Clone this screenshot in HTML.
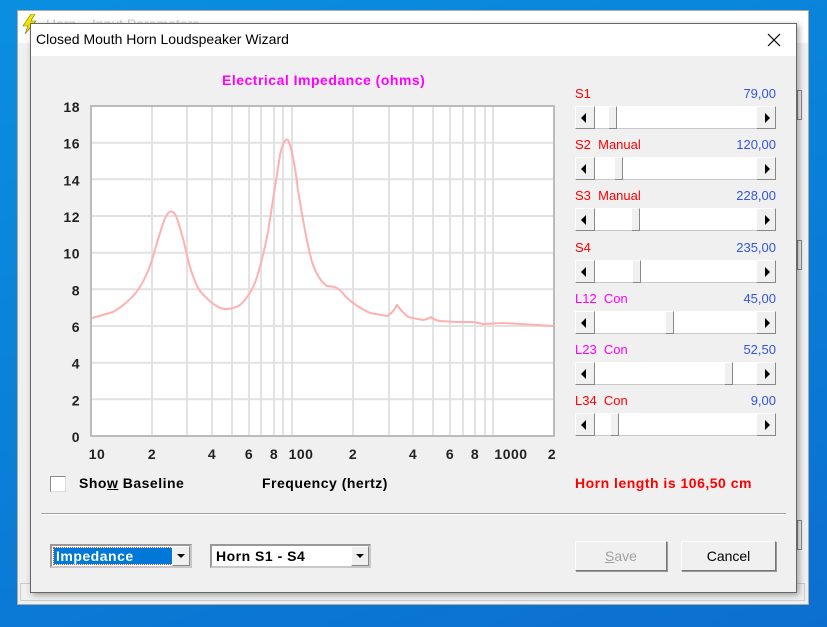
<!DOCTYPE html>
<html><head><meta charset="utf-8"><style>
*{margin:0;padding:0;box-sizing:border-box}
body{width:827px;height:627px;overflow:hidden;position:relative;background:linear-gradient(160deg,#0a8fe0 0%,#0a7fd8 50%,#0c6fd0 100%);font-family:"Liberation Sans",sans-serif}
.abs{position:absolute}
.b{font-weight:bold;font-size:14px;letter-spacing:0.5px}
.sb{position:absolute;left:575px;width:201px;height:23px;background:#fff;border-bottom:1px solid #c8c8c8}
.sb .l,.sb .r{position:absolute;top:0;width:20px;height:23px;background:#f0f0f0;border:1px solid #fff;border-right-color:#888;border-bottom-color:#888}
.sb .l{left:0}.sb .r{right:0}
.sb .t{position:absolute;top:0;width:9px;height:23px;background:#f0f0f0;border:1px solid #fff;border-right-color:#888;border-bottom-color:#888}
.lab{position:absolute;left:575px;font-size:13px;color:#f00}
.val{position:absolute;right:51px;font-size:13px;color:#3355dd}
.btn{position:absolute;height:30px;background:#f0f0f0;border:1px solid #fff;border-right-color:#777;border-bottom-color:#777;box-shadow:1px 1px 0 #999;font-size:14px;text-align:center;line-height:28px}
.cb{position:absolute;height:24px;background:#fff;border:2px solid #c8c8c8;border-top-color:#999;border-left-color:#999}
.cb .ar{position:absolute;right:0;top:0;width:18px;height:20px;background:#f0f0f0;border:1px solid #fff;border-right-color:#888;border-bottom-color:#888}
</style></head><body>
<!-- background window -->
<div class="abs" style="left:17px;top:10px;width:792px;height:595px;background:#f0f0f0;border:1px solid #aaa"></div>
<div class="abs" style="left:18px;top:11px;width:790px;height:32px;background:#fff"></div>
<svg class="abs" style="left:22px;top:14px" width="16" height="20"><path d="M9 0L1 12h5L3 20 14 7H9l4-7z" fill="#f5e400" stroke="#887700" stroke-width=".6"/></svg>
<div class="abs" style="left:46px;top:16px;color:#ccc;font-size:14px">Horn... Input Parameters</div>
<div class="abs" style="left:797px;top:90px;width:5px;height:30px;border:1px solid #888"></div>
<div class="abs" style="left:797px;top:240px;width:5px;height:30px;border:1px solid #888"></div>
<div class="abs" style="left:797px;top:520px;width:5px;height:30px;border:1px solid #888"></div>
<div class="abs" style="left:20px;top:583px;width:785px;height:18px;border:1px solid #ccc;background:#f0f0f0"></div>
<!-- dialog -->
<div class="abs" style="left:30px;top:23px;width:767px;height:570px;background:#f0f0f0;border:1px solid #666;box-shadow:2px 2px 6px rgba(0,0,0,.35)"></div>
<div class="abs" style="left:31px;top:24px;width:765px;height:32px;background:#fff"></div>
<div class="abs" style="left:36px;top:31px;font-size:14px;color:#000">Closed Mouth Horn Loudspeaker Wizard</div>
<svg class="abs" style="left:767px;top:33px" width="14" height="14"><path d="M1 1L13 13M13 1L1 13" stroke="#000" stroke-width="1.2"/></svg>

<div class="abs b" style="left:222px;top:72px;color:#f0f" >Electrical Impedance (ohms)</div>

<svg class="abs" style="left:0;top:0" width="560" height="470">
<rect x="91" y="106" width="463" height="330" fill="#fff" stroke="#bbb" stroke-width="2"/>
<g stroke="#e2e2e2" stroke-width="2">
<line x1="91" y1="142.7" x2="554" y2="142.7"/><line x1="91" y1="179.3" x2="554" y2="179.3"/><line x1="91" y1="216" x2="554" y2="216"/><line x1="91" y1="252.7" x2="554" y2="252.7"/><line x1="91" y1="289.3" x2="554" y2="289.3"/><line x1="91" y1="326" x2="554" y2="326"/><line x1="91" y1="362.7" x2="554" y2="362.7"/><line x1="91" y1="399.3" x2="554" y2="399.3"/>
<line x1="152" y1="106" x2="152" y2="436"/><line x1="187" y1="106" x2="187" y2="436"/><line x1="212" y1="106" x2="212" y2="436"/><line x1="232" y1="106" x2="232" y2="436"/><line x1="249" y1="106" x2="249" y2="436"/><line x1="261" y1="106" x2="261" y2="436"/><line x1="274" y1="106" x2="274" y2="436"/><line x1="283" y1="106" x2="283" y2="436"/><line x1="292" y1="106" x2="292" y2="436"/>
<line x1="353" y1="106" x2="353" y2="436"/><line x1="389" y1="106" x2="389" y2="436"/><line x1="413" y1="106" x2="413" y2="436"/><line x1="433" y1="106" x2="433" y2="436"/><line x1="450" y1="106" x2="450" y2="436"/><line x1="463" y1="106" x2="463" y2="436"/><line x1="475" y1="106" x2="475" y2="436"/><line x1="485" y1="106" x2="485" y2="436"/><line x1="493" y1="106" x2="493" y2="436"/>
</g>
<rect x="91" y="106" width="463" height="330" fill="none" stroke="#bbb" stroke-width="2"/>
<path fill="none" stroke="#ffb0b0" stroke-width="2" stroke-linejoin="round" d="M92,318 L113,312 Q125,305 134,295 Q145,282 152,260 Q160,232 165,218 Q171,206 176,216 Q182,232 188,260 Q194,282 200,291 Q210,303 220,308 Q230,311 240,305 Q250,296 256,280 Q262,262 268,232 Q276,180 280,155 Q284,137 288,140 Q293,150 298,190 Q306,240 312,262 Q318,280 327,286 L335,287 Q340,289 345,296 Q355,306 370,313 L387,316 Q393,313 397,305 Q402,312 408,317 L423,320 Q428,319 431,317 Q434,320 440,321 L457,322 L473,322 L483,324 L503,323 L537,325 L553,326"/>
<g font-family="Liberation Sans" font-weight="bold" font-size="14" fill="#222" text-anchor="end" letter-spacing="0.5">
<text x="80" y="112">18</text><text x="80" y="148.7">16</text><text x="80" y="185.3">14</text><text x="80" y="222">12</text><text x="80" y="258.7">10</text><text x="80" y="295.3">8</text><text x="80" y="332">6</text><text x="80" y="368.7">4</text><text x="80" y="405.3">2</text><text x="80" y="442">0</text>
</g>
<g font-family="Liberation Sans" font-weight="bold" font-size="14" fill="#222" text-anchor="middle" letter-spacing="0.5">
<text x="97" y="459">10</text><text x="152" y="459">2</text><text x="212" y="459">4</text><text x="249" y="459">6</text><text x="274" y="459">8</text><text x="301" y="459">100</text><text x="353" y="459">2</text><text x="413" y="459">4</text><text x="450" y="459">6</text><text x="475" y="459">8</text><text x="511" y="459">1000</text><text x="552" y="459">2</text>
</g>
</svg>

<div class="abs" style="left:50px;top:476px;width:16px;height:16px;background:#fff;border:1px solid #888;border-right-color:#ddd;border-bottom-color:#ddd"></div>
<div class="abs b" style="left:79px;top:475px;color:#000">Sho<u>w</u> Baseline</div>
<div class="abs b" style="left:262px;top:475px;color:#000">Frequency (hertz)</div>
<div class="abs b" style="left:575px;top:475px;color:#f00">Horn length is 106,50 cm</div>

<div class="lab" style="top:86px">S1</div><div class="val" style="top:86px">79,00</div>
<div class="sb" style="top:106px"><div class="l"></div><div class="t" style="left:33px"></div><div class="r"></div></div>
<div class="lab" style="top:137px">S2&nbsp; Manual</div><div class="val" style="top:137px">120,00</div>
<div class="sb" style="top:157px"><div class="l"></div><div class="t" style="left:39px"></div><div class="r"></div></div>
<div class="lab" style="top:188px">S3&nbsp; Manual</div><div class="val" style="top:188px">228,00</div>
<div class="sb" style="top:208px"><div class="l"></div><div class="t" style="left:56px"></div><div class="r"></div></div>
<div class="lab" style="top:240px">S4</div><div class="val" style="top:240px">235,00</div>
<div class="sb" style="top:260px"><div class="l"></div><div class="t" style="left:57px"></div><div class="r"></div></div>
<div class="lab" style="top:291px;color:#f0f">L12&nbsp; Con</div><div class="val" style="top:291px">45,00</div>
<div class="sb" style="top:311px"><div class="l"></div><div class="t" style="left:90px"></div><div class="r"></div></div>
<div class="lab" style="top:342px;color:#f0f">L23&nbsp; Con</div><div class="val" style="top:342px">52,50</div>
<div class="sb" style="top:362px"><div class="l"></div><div class="t" style="left:149px"></div><div class="r"></div></div>
<div class="lab" style="top:393px">L34&nbsp; Con</div><div class="val" style="top:393px">9,00</div>
<div class="sb" style="top:413px"><div class="l"></div><div class="t" style="left:35px"></div><div class="r"></div></div>
<svg class="abs" style="left:0;top:0" width="827" height="470" fill="#000">
<g id="a"><path d="M581 118l5-5v10z"/><path d="M770 118l-5-5v10z"/></g>
<use href="#a" y="51"/><use href="#a" y="102"/><use href="#a" y="154"/><use href="#a" y="205"/><use href="#a" y="256"/><use href="#a" y="307"/>
</svg>

<div class="abs" style="left:41px;top:513px;width:745px;height:2px;border-top:1px solid #a0a0a0;border-bottom:1px solid #fff"></div>

<div class="cb" style="left:50px;top:544px;width:142px"><div class="abs" style="left:2px;top:2px;width:118px;height:16px;background:#0078d7;outline:1px dotted #a55"></div><div class="abs b" style="left:4px;top:2px;color:#fff;font-size:14px">Impedance</div><div class="ar"></div><svg class="abs" style="right:5px;top:8px" width="8" height="5"><path d="M0 0h8L4 4z"/></svg></div>
<div class="cb" style="left:210px;top:544px;width:161px"><div class="abs b" style="left:4px;top:2px;color:#000;font-size:14px">Horn S1 - S4</div><div class="ar"></div><svg class="abs" style="right:5px;top:8px" width="8" height="5"><path d="M0 0h8L4 4z"/></svg></div>

<div class="btn" style="left:575px;top:541px;width:92px;color:#a0a0a0"><u>S</u>ave</div>
<div class="btn" style="left:681px;top:541px;width:95px;color:#000">Cancel</div>
</body></html>
